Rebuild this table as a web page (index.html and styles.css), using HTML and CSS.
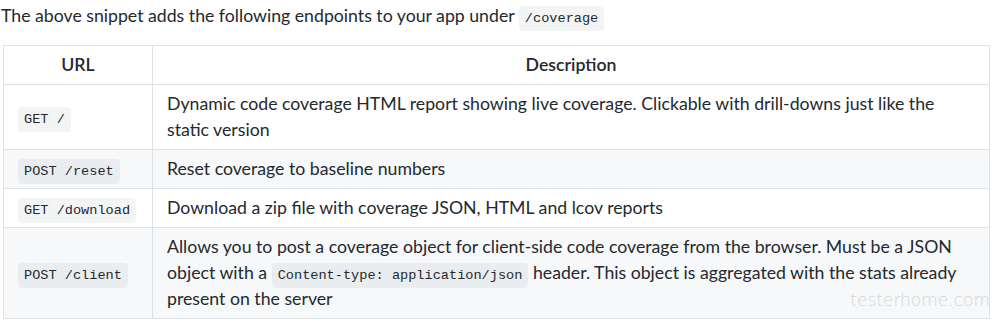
FILE: index.html
```html
<!DOCTYPE html>
<html lang="en">

<head>
  <meta charset="UTF-8" />
  <meta name="viewport" content="width=device-width, initial-scale=1.0" />
  <title>Coverage endpoints</title>
  <link rel="stylesheet" href="styles.css">
</head>

<body>
  <div class="doc">
    <p class="intro">The above snippet adds the following endpoints to your app under <code>/coverage</code></p>
    <table class="endpoints">
      <thead>
        <tr>
          <th class="url">URL</th>
          <th>Description</th>
        </tr>
      </thead>
      <tbody>
        <tr>
          <td class="url"><code>GET /</code></td>
          <td>Dynamic code coverage HTML report showing live coverage. Clickable with drill-downs just like the static version</td>
        </tr>
        <tr>
          <td class="url"><code>POST /reset</code></td>
          <td>Reset coverage to baseline numbers</td>
        </tr>
        <tr>
          <td class="url"><code>GET /download</code></td>
          <td>Download a zip file with coverage JSON, HTML and lcov reports</td>
        </tr>
        <tr>
          <td class="url"><code>POST /client</code></td>
          <td>Allows you to post a coverage object for client-side code coverage from the browser. Must be a JSON object with a <code>Content-type: application/json</code> header. This object is aggregated with the stats already present on the server</td>
        </tr>
      </tbody>
    </table>
    <div class="watermark">testerhome.com</div>
  </div>
</body>

</html>
```

FILE: styles.css
```css
body {
  margin: 0;
  font-family: Lato, "Noto Sans", sans-serif;
  font-size: 17.7px;
  line-height: 26px;
  color: #24292e;
  background: #fff;
}

.doc {
  position: relative;
  padding: 3px 6px 0 3px;
}

.intro {
  margin: 0 0 16px -2px;
}

code {
  font-family: "Liberation Mono", monospace;
  font-size: 13.6px;
  line-height: 1;
  padding: 5px 6px;
  border-radius: 4px;
  background: rgba(27, 31, 35, 0.05);
}

.endpoints {
  width: 987px;
  border-collapse: collapse;
}

.endpoints th,
.endpoints td {
  border: 1px solid #dfe2e5;
  padding: 6px 14px;
}

.endpoints th {
  font-weight: 600;
  text-align: center;
}

.endpoints .url {
  width: 120px;
  text-align: left;
}

.endpoints th.url {
  text-align: center;
}

.endpoints tbody tr:nth-child(2n+2) {
  background: #f6f8fa;
}

.watermark {
  position: absolute;
  right: 6px;
  top: 290px;
  font-family: "DejaVu Sans", sans-serif;
  font-weight: 200;
  font-size: 17px;
  line-height: 20px;
  color: #d4d6d8;
}
```
